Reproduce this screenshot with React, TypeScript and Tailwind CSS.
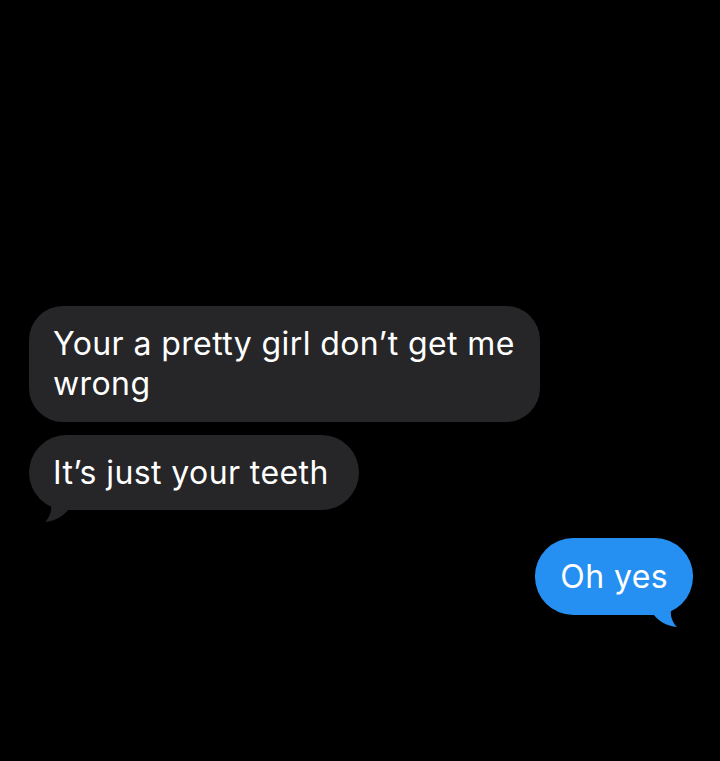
import React from "react";

const font = { fontFamily: "Inter, 'Liberation Sans', sans-serif" };

function Tail({ color, side }: { color: string; side: "left" | "right" }) {
  return (
    <svg
      width="40"
      height="24"
      viewBox="0 0 40 24"
      className={`absolute bottom-[-18px] ${side === "left" ? "left-[10px]" : "right-[10px] -scale-x-100"}`}
    >
      <path d="M12 0 C 13 8, 10 14, 6 18 C 16 17, 26 12, 32 2 Z" fill={color} />
    </svg>
  );
}

export default function App() {
  return (
    <main className="flex h-[761px] w-[720px] flex-col bg-black pt-[306px] text-white" style={font}>
      <div className="ml-[29px] w-[511px] rounded-[34px] bg-[#262628] py-[18px] pl-6 pr-6 text-[32px] leading-[40px] tracking-[0.4px]">
        Your a pretty girl don’t get me wrong
      </div>
      <div className="relative ml-[29px] mt-[13px] w-fit rounded-[38px] bg-[#262628] py-[18px] pl-6 pr-[30px] text-[32px] leading-[39px] tracking-[0.4px]">
        It’s just your teeth
        <Tail color="#262628" side="left" />
      </div>
      <div className="relative mr-[27px] mt-[28px] self-end rounded-[38px] bg-[#2690f2] px-[25px] py-[19px] text-[32px] leading-[39px] tracking-[0.4px]">
        Oh yes
        <Tail color="#2690f2" side="right" />
      </div>
    </main>
  );
}
